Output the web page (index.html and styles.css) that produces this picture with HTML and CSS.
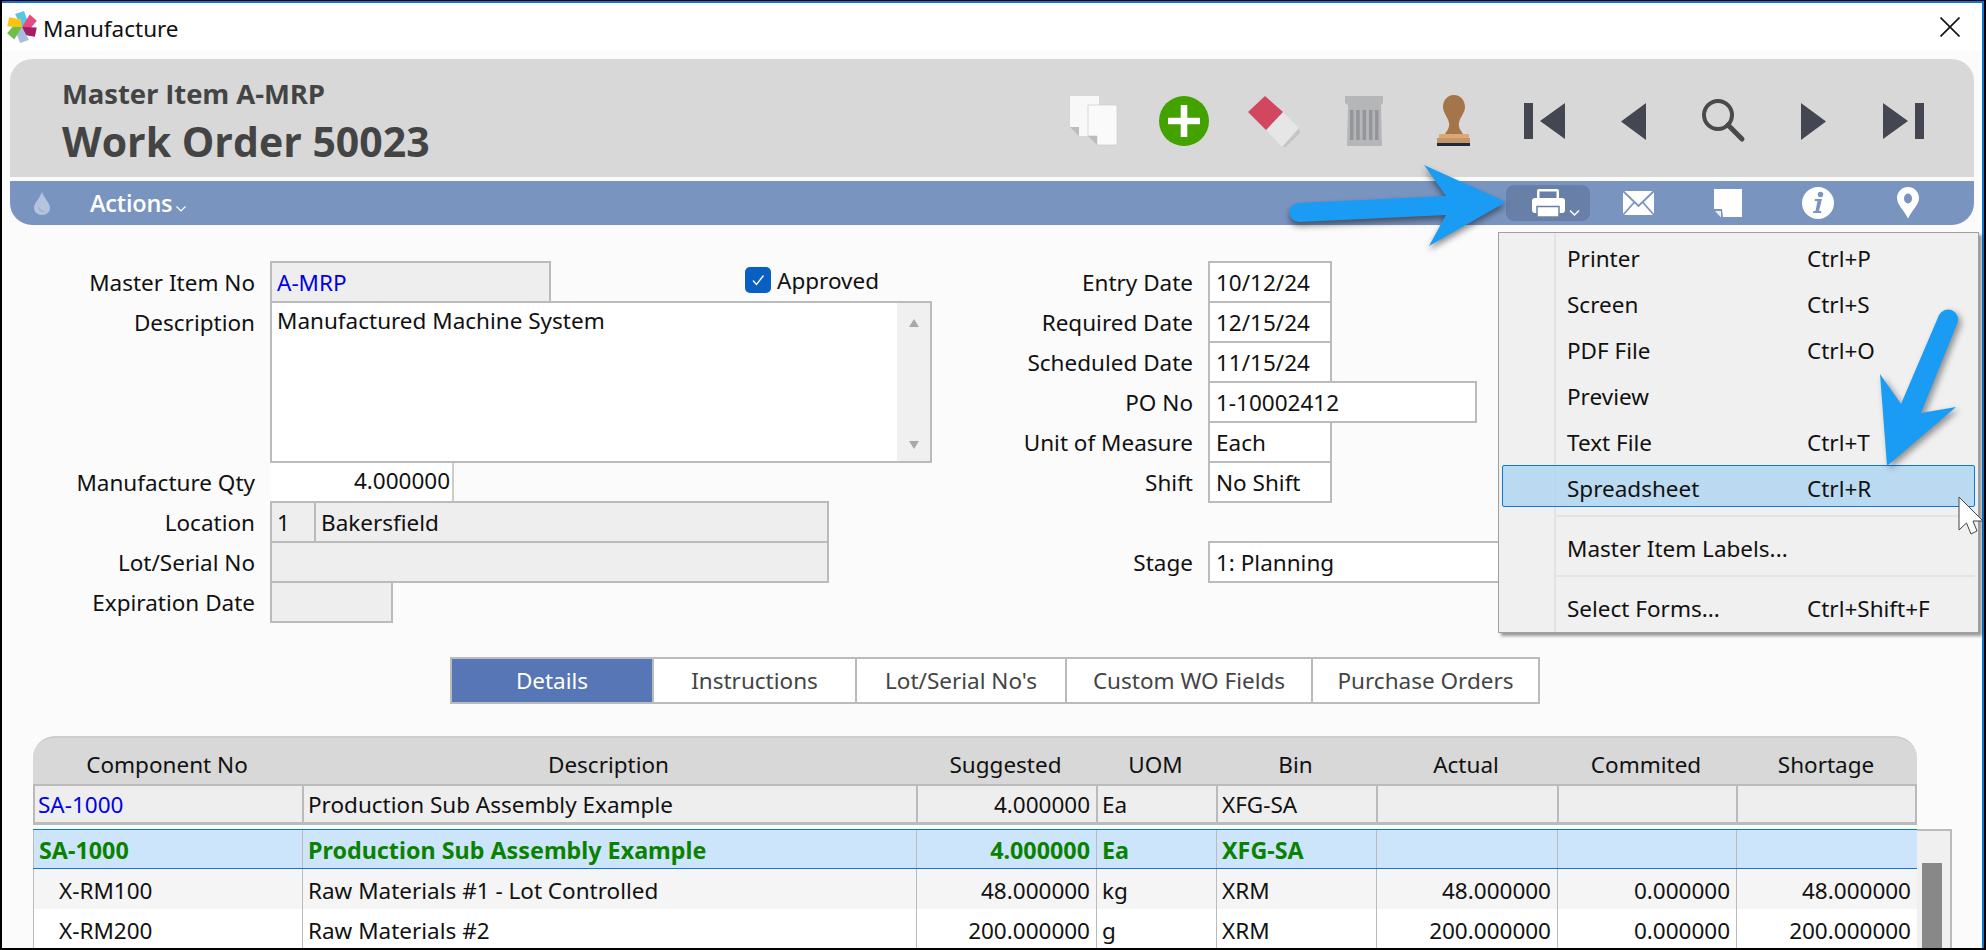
FILE: index.html
```html
<!DOCTYPE html>
<html lang="en">
<head>
<meta charset="utf-8">
<title>Manufacture</title>
<link rel="stylesheet" href="styles.css">
</head>
<body>
<div class="window">
  <div class="frame">
    <div class="titlebar">
      <svg class="logo" viewBox="0 0 32 32" width="32" height="32">
        <path fill="#58c6e6" d="M16 16 L9 3 L18 0 L22 11Z"/>
        <path fill="#e84a82" d="M16 16 L9 3 L18 0 L22 11Z" transform="rotate(60 16 16)"/>
        <path fill="#a31f62" d="M16 16 L9 3 L18 0 L22 11Z" transform="rotate(120 16 16)"/>
        <path fill="#a8bcdc" d="M16 16 L9 3 L18 0 L22 11Z" transform="rotate(180 16 16)"/>
        <path fill="#6fbe4a" d="M16 16 L9 3 L18 0 L22 11Z" transform="rotate(240 16 16)"/>
        <path fill="#fcc50f" d="M16 16 L9 3 L18 0 L22 11Z" transform="rotate(300 16 16)"/>
      </svg>
      <span class="title-text">Manufacture</span>
      <svg class="close" viewBox="0 0 20 20" width="20" height="20"><path d="M0.5 0.5 L19.5 19.5 M19.5 0.5 L0.5 19.5" stroke="#111" stroke-width="1.6" fill="none"/></svg>
    </div>
    <div class="content">
      <header class="panel">
        <div class="panel-titles">
          <div class="subtitle">Master Item A-MRP</div>
          <div class="main-title">Work Order 50023</div>
        </div>
        <div class="tools">
          <svg class="tool" viewBox="0 0 90 60"><path fill="#f8f8f8" d="M21 5H50V45H30V36H21Z"/><path fill="#bcbcbc" d="M21 36H30V45Z"/><path fill="#fafafa" stroke="#cfcfcf" stroke-width=".8" d="M39 14H68V54H48V45H39Z"/><path fill="#bcbcbc" d="M39 45H48V54Z"/></svg>
          <svg class="tool" viewBox="0 0 90 60"><circle cx="45" cy="30" r="25" fill="#43a100"/><path fill="#fff" d="M41.7 14H48.3V26.7H61V33.3H48.3V46H41.7V33.3H29V26.7H41.7Z"/></svg>
          <svg class="tool" viewBox="0 0 90 60"><path fill="#c5c5c5" d="M70 37L71 42L57 56H52Z"/><path fill="#e6e6e6" d="M54 21L37 39L53 56L70 37Z"/><path fill="#d2475f" d="M36 5L19 21L37 39L54 21Z"/></svg>
          <svg class="tool" viewBox="0 0 90 60"><path fill="#b5b6b8" d="M26 5H64V12L62 14L63 55H28L29 14L26 12Z"/><path fill="#94959a" d="M31 19h3.500v30h-3.500zM37.200 19h3.500v30h-3.500zM43.600 19h3.500v30h-3.500zM50 19h3.500v30H50zM56 19h3.500v30h-3.500z"/></svg>
          <svg class="tool" viewBox="0 0 90 60"><path fill="#a5754a" d="M45 4C52 4 56 10 56 16C56 22 51 26 50 32C49 36 52 40 54 43H36C38 40 41 36 40 32C39 26 34 22 34 16C34 10 38 4 45 4Z"/><path fill="#dba878" d="M30 43H60V47H30Z"/><path fill="#c49566" d="M28 47H61V52H28Z"/><path fill="#1e2a3f" d="M28 52H61V55H28Z"/></svg>
          <svg class="tool" viewBox="0 0 90 60"><path fill="#444652" d="M25 12H34V48H25ZM41 30L66 12V48Z"/></svg>
          <svg class="tool" viewBox="0 0 90 60"><path fill="#444652" d="M32 30.500L57 12V49Z"/></svg>
          <svg class="tool" viewBox="0 0 90 60"><circle cx="39" cy="24" r="14" fill="none" stroke="#4a4a4a" stroke-width="4"/><path d="M49 34L63 48" stroke="#4a4a4a" stroke-width="5" stroke-linecap="round"/></svg>
          <svg class="tool" viewBox="0 0 90 60"><path fill="#444652" d="M32 12L57 30.500L32 49Z"/></svg>
          <svg class="tool" viewBox="0 0 90 60"><path fill="#444652" d="M24 12L49 30L24 48ZM56 12H65V48H56Z"/></svg>
        </div>
      </header>
      <nav class="bar">
        <svg class="drop" viewBox="0 0 16 23" width="16" height="23"><path fill="#b5c4de" d="M8 0C10 6 16 11 16 16A8 7 0 0 1 0 16C0 11 6 6 8 0Z"/><path fill="#9db0d2" d="M4 14C4 19 8 21 12 20C8 19 6 17 4 14Z"/></svg>
        <span class="actions">Actions</span>
        <svg class="actions-caret" viewBox="0 0 10 6" width="10" height="6"><path d="M0.500 0.500L5 5L9.500 0.500" fill="none" stroke="#fff" stroke-width="1.200"/></svg>
        <div class="bar-tools">
          <div class="bar-active">
            <svg class="bar-active-icon" viewBox="0 0 84 36"><rect x="31" y="4" width="22" height="11" rx="2" fill="#fff"/><rect x="33.500" y="6.500" width="17" height="8" fill="#6880a8"/><rect x="26" y="13" width="33" height="15" rx="3" fill="#fff"/><rect x="31" y="21.500" width="22" height="10.500" fill="#fff" stroke="#6880a8" stroke-width="1.500"/><path d="M64 25.500L68.500 30L73 25.500" fill="none" stroke="#fff" stroke-width="1.500"/></svg>
          </div>
          <svg class="bar-tool" viewBox="0 0 90 44"><rect x="30" y="10" width="31" height="24" rx="1.500" fill="#fff"/><path d="M30 10L45.500 25L61 10M30 34L41.500 21M61 34L49.500 21" fill="none" stroke="#7a94c0" stroke-width="1.800"/></svg>
          <svg class="bar-tool" viewBox="0 0 90 44"><path fill="#fff" d="M31 8H59V36H40L39 28H31Z"/><path fill="#e8eef8" d="M32 30H38V36.500Z"/></svg>
          <svg class="bar-tool" viewBox="0 0 90 44"><circle cx="45" cy="22" r="16" fill="#fff"/><circle cx="47.500" cy="13.500" r="2.700" fill="#7a94c0"/><path fill="#7a94c0" d="M42 18H49L46 30H48.500L48 32H40L40.500 30H42.500L44.500 20H41.500Z"/></svg>
          <svg class="bar-tool" viewBox="0 0 90 44"><path fill="#fff" d="M45 37.500C41 29 34 24 34 17A11 11 0 0 1 56 17C56 24 49 29 45 37.500Z"/><ellipse cx="45" cy="17.500" rx="4" ry="5" fill="#7a94c0"/></svg>
        </div>
      </nav>
      <section class="form">
        <div class="form-left">
          <label class="lbl">Master Item No</label>
          <div class="field-line"><div class="fld ro w-master link">A-MRP</div><div class="approved"><span class="check"><svg viewBox="0 0 26 26" width="26" height="26"><path d="M8 13.500L11.500 17.500L18.500 8.500" fill="none" stroke="#fff" stroke-width="1.300"/></svg></span><span>Approved</span></div></div>
          <label class="lbl">Description</label>
          <div class="fld desc"><span class="desc-text">Manufactured Machine System</span><div class="desc-scroll"><span class="sb-up"></span><span class="sb-down"></span></div></div>
          <label class="lbl">Manufacture Qty</label>
          <div class="field-line"><div class="fld w-qty num">4.000000</div></div>
          <label class="lbl">Location</label>
          <div class="field-line"><div class="fld ro w-locno">1</div><div class="fld ro w-loc">Bakersfield</div></div>
          <label class="lbl">Lot/Serial No</label>
          <div class="field-line"><div class="fld ro w-lot"></div></div>
          <label class="lbl">Expiration Date</label>
          <div class="field-line"><div class="fld ro w-exp"></div></div>
        </div>
        <div class="form-right">
          <label class="lbl">Entry Date</label><div class="fld w-date">10/12/24</div>
          <label class="lbl">Required Date</label><div class="fld w-date">12/15/24</div>
          <label class="lbl">Scheduled Date</label><div class="fld w-date">11/15/24</div>
          <label class="lbl">PO No</label><div class="fld w-po">1-10002412</div>
          <label class="lbl">Unit of Measure</label><div class="fld w-date">Each</div>
          <label class="lbl">Shift</label><div class="fld w-date">No Shift</div>
          <div class="spacer"></div>
          <label class="lbl">Stage</label><div class="fld w-stage">1: Planning</div>
        </div>
      </section>
      <div class="tabs">
        <div class="tab tab-on w1">Details</div>
        <div class="tab w2">Instructions</div>
        <div class="tab w3">Lot/Serial No's</div>
        <div class="tab w4">Custom WO Fields</div>
        <div class="tab w5">Purchase Orders</div>
      </div>
      <section class="grid">
        <div class="grid-head cols">
          <div>Component No</div><div>Description</div><div>Suggested</div><div>UOM</div><div>Bin</div><div>Actual</div><div>Commited</div><div>Shortage</div>
        </div>
        <div class="grid-entry cols">
          <div class="link">SA-1000</div><div>Production Sub Assembly Example</div><div class="num">4.000000</div><div>Ea</div><div>XFG-SA</div><div></div><div></div><div></div>
        </div>
        <div class="grid-body">
          <div class="grid-rows">
            <div class="row sel cols">
              <div>SA-1000</div><div>Production Sub Assembly Example</div><div class="num">4.000000</div><div>Ea</div><div>XFG-SA</div><div></div><div></div><div></div>
            </div>
            <div class="row alt cols">
              <div class="indent">X-RM100</div><div>Raw Materials #1 - Lot Controlled</div><div class="num">48.000000</div><div>kg</div><div>XRM</div><div class="num">48.000000</div><div class="num">0.000000</div><div class="num">48.000000</div>
            </div>
            <div class="row cols">
              <div class="indent">X-RM200</div><div>Raw Materials #2</div><div class="num">200.000000</div><div>g</div><div>XRM</div><div class="num">200.000000</div><div class="num">0.000000</div><div class="num">200.000000</div>
            </div>
          </div>
          <div class="vscroll"><div class="thumb"></div></div>
        </div>
      </section>
    </div>
  </div>

  <div class="menu">
    <div class="mi"><span class="mi-label">Printer</span><span>Ctrl+P</span></div>
    <div class="mi"><span class="mi-label">Screen</span><span>Ctrl+S</span></div>
    <div class="mi"><span class="mi-label">PDF File</span><span>Ctrl+O</span></div>
    <div class="mi"><span class="mi-label">Preview</span></div>
    <div class="mi"><span class="mi-label">Text File</span><span>Ctrl+T</span></div>
    <div class="mi mi-on"><span class="mi-label">Spreadsheet</span><span>Ctrl+R</span></div>
    <div class="msep"></div>
    <div class="mi"><span class="mi-label">Master Item Labels...</span></div>
    <div class="msep"></div>
    <div class="mi"><span class="mi-label">Select Forms...</span><span>Ctrl+Shift+F</span></div>
  </div>

  <svg class="overlay" viewBox="0 0 1986 950" width="1986" height="950">
    <path class="arrow-a" fill="#1a9cf5" d="M1299 203L1446 196L1424 165L1506 202L1429 246L1446 215L1299 222A9.500 9.500 0 0 1 1299 203Z"/>
    <path class="arrow-b" fill="#1a9cf5" d="M1939 315L1901 404L1880 374L1887 466L1956 407L1921 413L1957 324A10 10 0 0 0 1939 315Z"/>
    <path class="cursor" fill="#fff" stroke="#444" stroke-width="1" d="M1959 497V530L1966.500 523L1971 534L1977 531L1973 521H1983Z"/>
  </svg>
</div>
</body>
</html>
```
FILE: styles.css
```css
* { box-sizing: border-box; }
html, body { margin: 0; padding: 0; }
body {
  font-family: "Noto Sans", "Open Sans", sans-serif;
  font-size: 22.5px;
  color: #111;
  background: #000;
}
.window {
  position: relative;
  width: 1986px;
  height: 950px;
  overflow: hidden;
  background: #000;
  padding: 1px 2px 2px 2px;
}
.frame {
  height: 947px;
  border-top: 2px solid #0a78d4;
  border-right: 2px solid #0a78d4;
  background: #fbfbfb;
  overflow: hidden;
}
.titlebar {
  display: flex;
  align-items: center;
  height: 48px;
  background: #fff;
  padding-left: 4px;
}
.title-text { margin-left: 5px; padding-top: 2px; }
.close { margin-left: auto; margin-right: 22px; }

.content { padding: 8px 8px 0; }
.panel {
  display: flex;
  justify-content: space-between;
  height: 118px;
  background: #d8d8d8;
  border-radius: 22px 22px 0 0;
}
.panel-titles { padding: 18px 0 0 52px; font-family: "Open Sans", sans-serif; color: #444; }
.subtitle { font-size: 27.5px; font-weight: 700; line-height: 34px; letter-spacing: -0.1px; }
.main-title { font-size: 41px; font-weight: 700; line-height: 56px; margin-top: 2px; }
.tools { display: flex; padding: 32px 25px 0 0; }
.tool { width: 90px; height: 60px; }

.bar {
  display: flex;
  align-items: center;
  height: 44px;
  margin-top: 4px;
  background: #7a94c0;
  border-radius: 0 0 22px 22px;
  padding-left: 24px;
}
.actions {
  margin-left: 40px;
  color: #fff;
  font-family: "Open Sans", sans-serif;
  font-weight: 600;
  font-size: 23.5px;
  letter-spacing: -0.2px;
}
.actions-caret { margin: 12px 0 0 4px; }
.bar-tools { display: flex; align-items: center; margin-left: auto; padding-right: 21px; }
.bar-active {
  width: 84px;
  height: 36px;
  margin: 0 3px;
  background: #6880a8;
  border-radius: 8px;
}
.bar-active-icon { display: block; width: 84px; height: 36px; }
.bar-tool { width: 90px; height: 44px; }

.form { display: flex; margin-top: 36px; }
.form-left {
  display: grid;
  grid-template-columns: 260px 662px;
  grid-auto-rows: 40px;
  width: 922px;
}
.form-right {
  display: grid;
  grid-template-columns: 276px 400px;
  grid-auto-rows: 40px;
}
.lbl {
  height: 40px;
  line-height: 43px;
  text-align: right;
  padding-right: 15px;
}
.field-line { display: flex; height: 42px; }
.fld {
  height: 42px;
  line-height: 39px;
  padding: 0 5px;
  border: 2px solid #bbb;
  background: #fff;
  white-space: nowrap;
}
.ro { background: #eee; }
.link { color: #0000e6; }
.num { text-align: right; }
.w-master { width: 281px; }
.w-qty { width: 184px; padding-right: 2px; border-top: 0; border-bottom: 0; border-left: 2px solid #fff; border-right: 2px solid #ccc; }
.w-locno { width: 46px; }
.w-loc { width: 515px; margin-left: -2px; }
.w-lot { width: 559px; }
.w-exp { width: 123px; }
.w-date { width: 124px; padding-left: 6px; }
.w-po { width: 269px; padding-left: 6px; }
.w-stage { width: 400px; padding-left: 6px; }
.spacer { grid-column: 1 / -1; }

.approved { display: flex; align-items: center; margin-left: 194px; height: 38px; gap: 6px; }
.check { display: block; width: 26px; height: 26px; border-radius: 5px; background: #0a5fc2; }
.check svg { display: block; }

.desc {
  grid-row: span 4;
  position: relative;
  display: flex;
  justify-content: space-between;
  height: 162px;
  padding-right: 0;
  line-height: 30px;
  width: 662px;
}
.desc-text { padding-top: 3px; }
.desc-scroll {
  position: relative;
  width: 33px;
  background: #f0f0f0;
  display: flex;
  flex-direction: column;
  justify-content: space-between;
  align-items: center;
  padding: 16px 0 12px;
}
.sb-up, .sb-down { display: block; width: 0; height: 0; border-left: 5px solid transparent; border-right: 5px solid transparent; }
.sb-up { border-bottom: 8px solid #a8a8a8; }
.sb-down { border-top: 8px solid #a8a8a8; }

.form-left > .lbl:nth-of-type(2) { grid-row: span 4; }

.tabs {
  display: flex;
  width: 1090px;
  height: 47px;
  margin: 36px 0 0 440px;
  border: 2px solid #bbb;
  background: #fff;
  color: #444;
}
.tab { display: flex; align-items: center; justify-content: center; border-left: 2px solid #bbb; }
.tab-on { background: #5676b5; color: #fff; border-left: 0; }
.w1 { width: 200px; }
.w2 { width: 203px; }
.w3 { width: 210px; }
.w4 { width: 246px; }
.w5 { width: 227px; }

.grid { margin: 32px 0 0 23px; width: 1919px; }
.cols { display: grid; grid-template-columns: 269px 614px 180px 120px 160px 181px 179px 181px; width: 1884px; }
.cols > div { padding: 0 6px 0 5px; white-space: nowrap; overflow: hidden; }
.grid-head {
  height: 48px;
  background: #d8d8d8;
  border-top: 2px solid #ccc;
  border-radius: 22px 22px 0 0;
  text-align: center;
  line-height: 53px;
}
.grid-entry { height: 41px; background: #eee; line-height: 38px; border: 2px solid #bbb; border-width: 2px 2px 3px 0; }
.grid-entry > div { border-left: 2px solid #bbb; padding-left: 4px; }
.grid-entry > .link { padding-left: 3px; }
.grid-body { display: flex; height: 130px; margin-top: 4px; }
.grid-rows { width: 1884px; }
.row { height: 40px; line-height: 44px; background: #fff; }
.row > div { border-left: 1.5px solid #bbb; }
.alt { background: #f5f5f5; }
.sel {
  background: #cce5fb;
  color: #0a8200;
  font-weight: 700;
  font-size: 23.3px;
  border-top: 1.500px solid #0a78d4;
  border-bottom: 1.500px solid #0a78d4;
  line-height: 41px;
}
.cols > .indent { padding-left: 25px; }
.vscroll { width: 35px; height: 130px; background: #f0f0f0; border: 2px solid #bbb; border-bottom: 0; border-left: 0; padding: 32px 8px 0 5px; }
.thumb { height: 100px; background: #888; }

.menu {
  position: absolute;
  left: 1498px;
  top: 232px;
  width: 481px;
  height: 401px;
  background: linear-gradient(90deg, #f0f0f0 55px, #e3e3e3 55px, #e3e3e3 57px, #f0f0f0 57px);
  border: 1px solid #a0a0a0;
  box-shadow: 3px 3px 3px rgba(0, 0, 0, 0.4);
  padding: 0 3px;
}
.mi {
  display: flex;
  align-items: center;
  height: 42px;
  margin: 2px 0 4px;
  padding-top: 4px;
  border: 1px solid transparent;
}
.mi-label { width: 240px; margin-left: 64px; white-space: nowrap; }
.mi-on { background: rgba(176, 214, 242, 0.85); border-color: #0a78d4; border-radius: 2px; }
.msep { height: 2px; margin: 8px 0 8px 53px; background: #e3e3e3; }

.overlay { position: absolute; left: 0; top: 0; pointer-events: none; }
.arrow-a { filter: drop-shadow(0 4px 3px rgba(0, 0, 0, 0.45)); }
.arrow-b { filter: drop-shadow(3px 3px 3px rgba(0, 0, 0, 0.4)); }
```
